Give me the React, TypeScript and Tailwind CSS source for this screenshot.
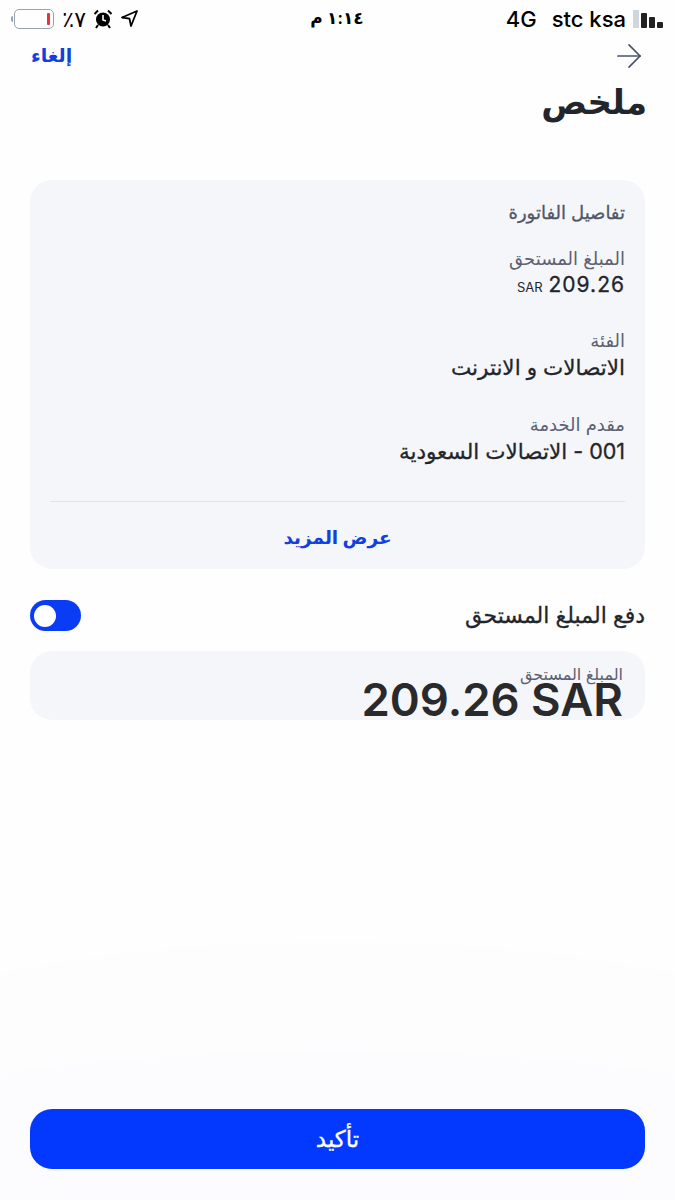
import { ArrowRight } from 'lucide-react';

const font = "font-['Inter','Noto_Sans','DejaVu_Sans',sans-serif]";

const StatusBar = () => (
  <div className="flex h-[37px] items-center justify-between pl-[11px] pr-[12px] text-black">
    {/* Battery, percent, alarm, location */}
    <div className="flex w-[200px] items-center">
      <span className="mr-[1px] h-[6px] w-[2px] rounded-l-sm bg-gray-400" />
      <div className="flex h-[20px] w-[40px] items-center justify-end rounded-[5px] border border-gray-400 pr-[3px]">
        <span className="h-[12px] w-[3px] rounded-[1px] bg-[#e8333c]" />
      </div>
      <span className="ml-[4px] w-[28px] text-[22px] leading-none" dir="rtl">٧٪</span>
      <svg className="ml-[7px] h-[20px] w-[20px]" viewBox="0 0 20 20" fill="none">
        <circle cx="10" cy="10.500" r="7" fill="#000" />
        <path d="M10 6v5l3 1" stroke="#fff" strokeWidth="1.600" />
        <path d="M1.500 5 5 1.500M18.500 5 15 1.500M5 16l-2 3M15 16l2 3" stroke="#000" strokeWidth="2" />
      </svg>
      <svg className="ml-[8px] h-[17px] w-[17px]" viewBox="0 0 17 17" fill="none">
        <path d="M16 1 1 7.500l7.500 1.200L10 16z" stroke="#000" strokeWidth="1.800" strokeLinejoin="round" />
      </svg>
    </div>
    <span className="text-[17px] font-semibold leading-none" dir="rtl">١:١٤ م</span>
    {/* Carrier */}
    <div className="flex w-[200px] items-center justify-end">
      <span className="text-[22px] font-medium leading-none">4G</span>
      <span className="ml-[15px] text-[22px] font-medium leading-none">stc ksa</span>
      <div className="ml-[7px] flex h-[18px] items-end gap-[2px]">
        <span className="h-[18px] w-[6px] bg-gray-300" />
        <span className="h-[15px] w-[6px] rounded-[1px] bg-[#222]" />
        <span className="h-[11px] w-[6px] rounded-[1px] bg-[#222]" />
        <span className="h-[6px] w-[6px] rounded-[1px] bg-[#222]" />
      </div>
    </div>
  </div>
);

const Field = ({ label, children, top }: { label: string; children: React.ReactNode; top: string }) => (
  <div className={top}>
    <div className="text-[18px] leading-[24px] text-[#5c6170]">{label}</div>
    <div className="text-[21.500px] leading-[28px] text-[#22252b] [-webkit-text-stroke:0.300px_#22252b]">{children}</div>
  </div>
);

export default function App() {
  return (
    <div
      dir="rtl"
      className={`${font} flex h-[1200px] w-[675px] flex-col overflow-hidden bg-[#fefefe] bg-[radial-gradient(ellipse_640px_150px_at_50%_1200px,#fcfcfe_99%,transparent_100%),radial-gradient(ellipse_700px_260px_at_50%_1200px,#fdfdfe_99%,transparent_100%)]`}
    >
      <div dir="ltr">
        <StatusBar />
      </div>

      {/* Nav */}
      <div className="flex h-[38px] items-center justify-between pl-[31px] pr-[27px]">
        <ArrowRight className="h-[38px] w-[38px] text-[#4a5468]" strokeWidth={1.100} />
        <span className="text-[19px] font-bold text-[#1140e0]">إلغاء</span>
      </div>
      <h1 className="pl-[30px] pr-[28px] text-[34px] font-bold leading-[54px] text-[#22252b]">ملخص</h1>

      {/* Bill details */}
      <div className="mx-[30px] mt-[51px] rounded-[22px] bg-[#f5f6fa] px-[20px] pt-[20px]">
        <div className="text-[18px] leading-[26px] text-[#4f5667] [-webkit-text-stroke:0.300px_#4f5667]">تفاصيل الفاتورة</div>
        <Field label="المبلغ المستحق" top="mt-[21px]">
          <span dir="ltr" className="flex items-baseline justify-end">
            <span className="mr-[6px] text-[13px] [-webkit-text-stroke:0px]">SAR</span>
            <span className="text-[21px] font-normal tracking-[1px]">209.26</span>
          </span>
        </Field>
        <Field label="الفئة" top="mt-[28px]">الاتصالات و الانترنت</Field>
        <Field label="مقدم الخدمة" top="mt-[32px]">001 - الاتصالات السعودية</Field>
        <div className="mt-[36px] border-t border-[#e2e3e6] pb-[19px] pt-[22px] text-center text-[18.500px] font-bold leading-[26px] text-[#1140e0]">
          عرض المزيد
        </div>
      </div>

      {/* Pay full amount */}
      <div className="mx-[30px] mt-[31px] flex h-[31px] items-center justify-between">
        <span className="text-[22px] text-[#22252b] [-webkit-text-stroke:0.300px_#22252b]">دفع المبلغ المستحق</span>
        <div dir="ltr" className="flex h-[31px] w-[51px] items-center rounded-full bg-[#0a3cf5] pl-[4px]">
          <span className="h-[22px] w-[22px] rounded-full bg-white" />
        </div>
      </div>
      <div className="mx-[30px] mt-[20px] h-[69px] overflow-hidden rounded-[22px] bg-[#f5f6fa] pl-[20px] pr-[22px] pt-[14px]">
        <div className="text-[16px] leading-[18px] text-[#5c6170]">المبلغ المستحق</div>
        <div dir="ltr" className="-mt-[8px] text-right text-[45.500px] font-semibold leading-[50px] text-[#2a2a2c]">209.26 SAR</div>
      </div>

      {/* Confirm */}
      <div className="mt-auto px-[30px] pb-[31px]">
        <div className="flex h-[60px] items-center justify-center rounded-[22px] bg-[#0338ff] text-[23px] text-white [-webkit-text-stroke:0.300px_#ffffff]">
          تأكيد
        </div>
      </div>
    </div>
  );
}
